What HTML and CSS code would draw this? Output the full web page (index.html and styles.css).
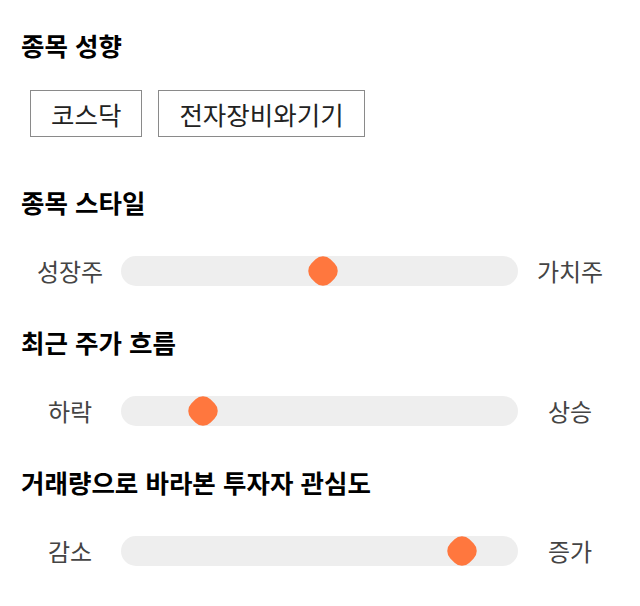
FILE: index.html
```html
<!DOCTYPE html>
<html lang="ko">
<head>
<meta charset="utf-8">
<link rel="stylesheet" href="styles.css">
</head>
<body>
<main class="page">
  <section class="group group-first">
    <h2 class="title">종목 성향</h2>
    <div class="tags">
      <span class="tag">코스닥</span>
      <span class="tag">전자장비와기기</span>
    </div>
  </section>
  <section class="group">
    <h2 class="title">종목 스타일</h2>
    <div class="slider-row">
      <span class="label">성장주</span>
      <div class="track"><span class="thumb" style="left: 50.8%"></span></div>
      <span class="label">가치주</span>
    </div>
  </section>
  <section class="group">
    <h2 class="title">최근 주가 흐름</h2>
    <div class="slider-row">
      <span class="label">하락</span>
      <div class="track"><span class="thumb" style="left: 20.7%"></span></div>
      <span class="label">상승</span>
    </div>
  </section>
  <section class="group">
    <h2 class="title">거래량으로 바라본 투자자 관심도</h2>
    <div class="slider-row">
      <span class="label">감소</span>
      <div class="track"><span class="thumb" style="left: 85.9%"></span></div>
      <span class="label">증가</span>
    </div>
  </section>
</main>
</body>
</html>
```
FILE: styles.css
```css
html, body {
  margin: 0;
  padding: 0;
  background: #ffffff;
}
body {
  font-family: "Noto Sans CJK KR", "Noto Sans", sans-serif;
  color: #111;
}
.page {
  padding: 30px 20px 0 20px;
  display: flex;
  flex-direction: column;
}
.group {
  display: flex;
  flex-direction: column;
  gap: 39px;
  margin-bottom: 41px;
}
.group-first {
  gap: 30px;
  margin-bottom: 50px;
}
.title {
  margin: 0;
  font-size: 25.5px;
  line-height: 30px;
  font-weight: 700;
  color: #000;
  padding-left: 1px;
}
.tags {
  display: flex;
  gap: 16px;
  padding-left: 10px;
}
.tag {
  box-sizing: border-box;
  height: 47px;
  display: flex;
  align-items: center;
  padding: 0 20px;
  border: 1px solid #8a8a8a;
  font-size: 25.5px;
  color: #222;
}
.slider-row {
  display: flex;
  align-items: center;
  height: 30px;
}
.label {
  width: 100px;
  flex: none;
  text-align: center;
  font-size: 24px;
  line-height: 30px;
  color: #444;
}
.track {
  position: relative;
  flex: 1;
  height: 30px;
  border-radius: 15px;
  background: #eeeeee;
  margin-left: 1px;
  margin-right: 2px;
}
.thumb {
  position: absolute;
  top: 50%;
  width: 27px;
  height: 27px;
  border-radius: 10.5px;
  background: #ff773e;
  transform: translate(-50%, -50%) rotate(45deg);
}
```
